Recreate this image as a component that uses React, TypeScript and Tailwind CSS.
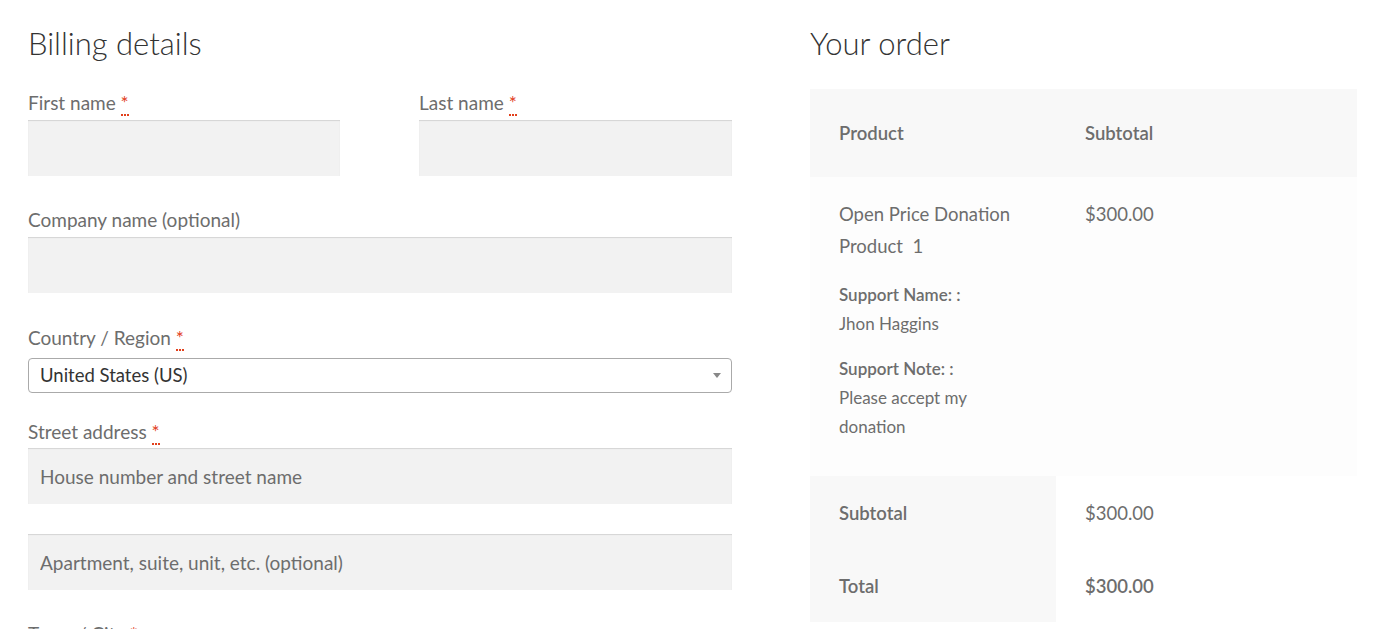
import React from "react";

const font = { fontFamily: "Lato, 'Noto Sans', sans-serif" };

function Req() {
  return (
    <>
      {" "}
      <abbr className="text-[#e2401c] no-underline border-b-2 border-dotted border-[#e2401c] leading-none">*</abbr>
    </>
  );
}

function Label({ children, req }: { children: React.ReactNode; req?: boolean }) {
  return (
    <label className="block h-[26px] leading-[26px] text-[19px] text-[#6d6d6d]">
      {children}
      {req && <Req />}
    </label>
  );
}

function TextInput({ placeholder }: { placeholder?: string }) {
  return (
    <input
      type="text"
      placeholder={placeholder}
      className="block w-full h-[56px] px-3 bg-[#f2f2f2] text-[19px] text-[#43454b] placeholder:text-[#6d6d6d] shadow-[inset_0_1px_1px_rgba(0,0,0,0.125)] outline-none"
    />
  );
}

export default function App() {
  return (
    <div className="min-h-screen bg-white flex gap-[78px] pl-[28px] pr-[16px] pt-[19px] overflow-hidden" style={font}>
      {/* Billing */}
      <div className="w-[704px] shrink-0">
        <h3 className="h-[48px] leading-[48px] text-[31px] font-light text-[#333333] mb-[23px]">Billing details</h3>

        <div className="flex justify-between">
          <div className="w-[312px]">
            <Label req>First name</Label>
            <div className="mt-[4px]"><TextInput /></div>
          </div>
          <div className="w-[313px]">
            <Label req>Last name</Label>
            <div className="mt-[4px]"><TextInput /></div>
          </div>
        </div>

        <div className="mt-[31px]">
          <Label>Company name (optional)</Label>
          <div className="mt-[4px]"><TextInput /></div>
        </div>

        <div className="mt-[32px]">
          <Label req>Country / Region</Label>
          <div className="mt-[7px] h-[35px] border border-[#aaaaaa] rounded-[4px] bg-white flex items-center justify-between pl-[11px] pr-[10px]">
            <span className="text-[18.5px] text-[#333333]">United States (US)</span>
            <span className="w-0 h-0 border-l-[4px] border-r-[4px] border-t-[5px] border-l-transparent border-r-transparent border-t-[#888888]" />
          </div>
        </div>

        <div className="mt-[26px]">
          <Label req>Street address</Label>
          <div className="mt-[3px]"><TextInput placeholder="House number and street name" /></div>
          <div className="mt-[30px]"><TextInput placeholder="Apartment, suite, unit, etc. (optional)" /></div>
        </div>

        <div className="mt-[31px]">
          <Label req>Town / City</Label>
        </div>
      </div>

      {/* Order */}
      <div className="w-[547px] shrink-0">
        <h3 className="h-[48px] leading-[48px] text-[31px] font-light text-[#333333] mb-[22px]">Your order</h3>
        <table className="w-full border-collapse text-[18.5px] text-[#6d6d6d]">
          <thead>
            <tr className="bg-[#f8f8f8] h-[88px]">
              <th className="w-[246px] text-left font-semibold pl-[29px] pt-[2px]">Product</th>
              <th className="text-left font-semibold pl-[29px] pt-[2px]">Subtotal</th>
            </tr>
          </thead>
          <tbody>
            <tr className="bg-[#fdfdfd]">
              <td className="align-top pl-[29px] pr-[20px] pt-[21px] pb-[35px]">
                <div className="leading-[32px]">Open Price Donation Product&nbsp; 1</div>
                <dl className="mt-[18px] text-[17px] leading-[29px]">
                  <dt className="font-semibold">Support Name: :</dt>
                  <dd>Jhon Haggins</dd>
                  <dt className="font-semibold mt-[16px]">Support Note: :</dt>
                  <dd className="w-[140px]">Please accept my donation</dd>
                </dl>
              </td>
              <td className="align-top pl-[29px] pt-[21px] leading-[32px]">$300.00</td>
            </tr>
          </tbody>
          <tfoot>
            <tr className="h-[73px]">
              <th className="bg-[#f8f8f8] text-left font-semibold pl-[29px] pt-[3px]">Subtotal</th>
              <td className="bg-white pl-[29px] pt-[3px]">$300.00</td>
            </tr>
            <tr className="h-[73px]">
              <th className="bg-[#f8f8f8] text-left font-semibold pl-[29px] pt-[3px]">Total</th>
              <td className="bg-white pl-[29px] pt-[3px] font-semibold">$300.00</td>
            </tr>
          </tfoot>
        </table>
      </div>
    </div>
  );
}
